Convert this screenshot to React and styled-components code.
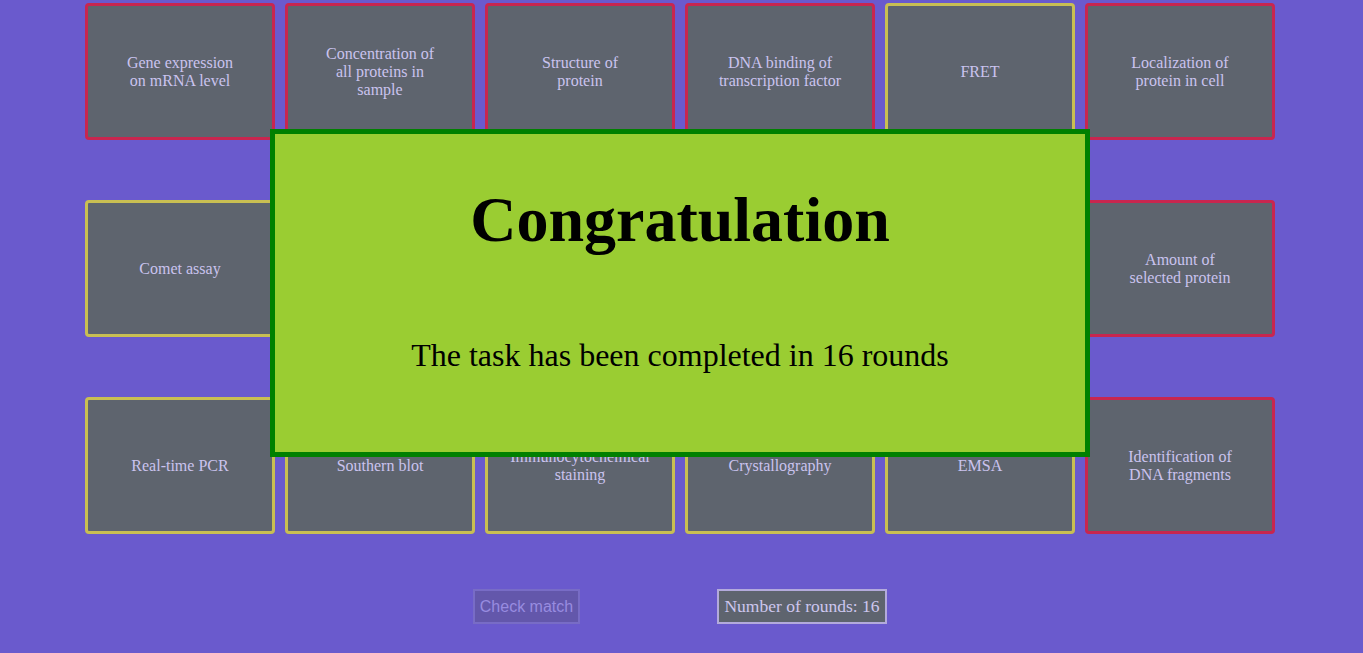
import React from "react";
import styled, { createGlobalStyle } from "styled-components";

const Global = createGlobalStyle`
  html, body { margin: 0; padding: 0; background: #6a5acd; }
  body { font-family: "Liberation Serif", "Times New Roman", serif; overflow: hidden; }
`;

const Page = styled.div`
  width: 1190px;
  margin: 3px 0 0 85px;
  position: relative;
`;

const Board = styled.div`
  display: grid;
  grid-template-columns: repeat(6, 190px);
  grid-auto-rows: 137px;
  column-gap: 10px;
  row-gap: 60px;
`;

const Card = styled.div`
  box-sizing: border-box;
  background: #5e646e;
  border: 3px solid ${(p) => (p.$tone === "red" ? "#c8264f" : "#c9bf52")};
  border-radius: 4px;
  display: flex;
  align-items: center;
  justify-content: center;
  text-align: center;
  color: #cac3ee;
  font-size: 16px;
  line-height: normal;
  padding: 0 10px;
`;

const Controls = styled.div`
  display: flex;
  justify-content: center;
  align-items: center;
  gap: 137px;
  margin-top: 55px;
`;

const CheckButton = styled.button`
  box-sizing: border-box;
  height: 35px;
  width: 107px;
  padding: 0;
  background: #6357ab;
  border: 2px solid #786cc6;
  color: #988ce0;
  font-family: "Liberation Sans", Arial, sans-serif;
  font-size: 16px;
  cursor: default;
`;

const RoundsBox = styled.div`
  box-sizing: border-box;
  height: 35px;
  width: 170px;
  display: flex;
  align-items: center;
  justify-content: center;
  background: #5e646e;
  border: 2px solid #b3aadc;
  color: #cdc7ee;
  font-size: 17.5px;
`;

const Modal = styled.div`
  position: absolute;
  left: 185px;
  top: 126px;
  width: 820px;
  height: 328px;
  box-sizing: border-box;
  background: #9acd32;
  border: 5px solid #008000;
  display: flex;
  flex-direction: column;
  align-items: center;
  padding-top: 49px;
  color: #000;
`;

const Title = styled.h1`
  margin: 0;
  font-size: 64px;
  font-weight: bold;
  line-height: normal;
`;

const Message = styled.p`
  margin: 80px 0 0;
  font-size: 32px;
  line-height: normal;
`;

const cards = [
  ["red", ["Gene expression", "on mRNA level"]],
  ["red", ["Concentration of", "all proteins in", "sample"]],
  ["red", ["Structure of", "protein"]],
  ["red", ["DNA binding of", "transcription factor"]],
  ["yellow", ["FRET"]],
  ["red", ["Localization of", "protein in cell"]],
  ["yellow", ["Comet assay"]],
  ["red", ["Western blot"]],
  ["yellow", ["Northern blot"]],
  ["red", ["Mass", "spectrometry"]],
  ["yellow", ["ChIP"]],
  ["red", ["Amount of", "selected protein"]],
  ["yellow", ["Real-time PCR"]],
  ["yellow", ["Southern blot"]],
  ["yellow", ["Immunocytochemical", "staining"]],
  ["yellow", ["Crystallography"]],
  ["yellow", ["EMSA"]],
  ["red", ["Identification of", "DNA fragments"]],
];

export default function App() {
  return (
    <>
      <Global />
      <Page>
        <Board>
          {cards.map(([tone, lines], i) => (
            <Card key={i} $tone={tone}>
              <span>
                {lines.map((l, j) => (
                  <React.Fragment key={j}>
                    {j > 0 && <br />}
                    {l}
                  </React.Fragment>
                ))}
              </span>
            </Card>
          ))}
        </Board>
        <Controls>
          <CheckButton disabled>Check match</CheckButton>
          <RoundsBox>Number of rounds: 16</RoundsBox>
        </Controls>
        <Modal>
          <Title>Congratulation</Title>
          <Message>The task has been completed in 16 rounds</Message>
        </Modal>
      </Page>
    </>
  );
}
